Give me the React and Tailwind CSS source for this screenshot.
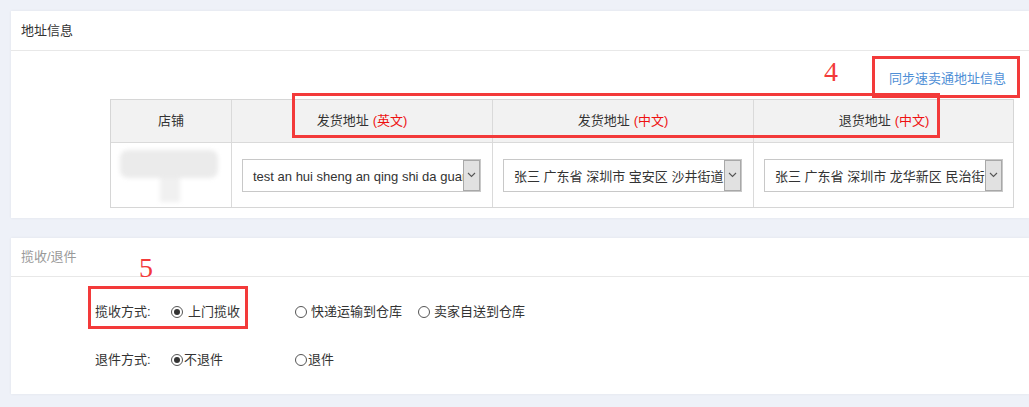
const font = { fontFamily: '"Liberation Sans", "Noto Sans CJK SC", sans-serif' };

function Select({ text }) {
  return (
    <div className="flex h-[33px] w-[239px] items-stretch border border-[#c8c8c8] bg-white">
      <div className="flex-1 overflow-hidden whitespace-nowrap pl-[10px] pt-[7px] text-[13px] text-[#333]">
        {text}
      </div>
      <div className="flex w-[17px] items-center justify-center border border-[#a8a8a8] bg-[#e1e1e1]">
        <svg width="9" height="6" viewBox="0 0 9 6">
          <path d="M1 1l3.5 3.5L8 1" fill="none" stroke="#555" strokeWidth="1.1" />
        </svg>
      </div>
    </div>
  );
}

function Radio({ checked }) {
  return (
    <span className="flex h-[12px] w-[12px] items-center justify-center rounded-full border border-[#555] bg-white">
      {checked && <span className="h-[6px] w-[6px] rounded-full bg-[#333]" />}
    </span>
  );
}

function Head({ label, lang }) {
  return (
    <div className="flex items-center justify-center border-l border-[#dadada] text-[13px] text-[#333]">
      {label}
      {lang && (
        <span className="ml-1 text-[#ee1111]">({lang})</span>
      )}
    </div>
  );
}

export default function App() {
  return (
    <div className="relative h-[407px] w-[1029px] overflow-hidden bg-[#eef1f8] pl-[11px] pt-[11px]" style={font}>
      <div className="h-[207px] bg-white shadow-[0_0_3px_rgba(0,0,0,0.06)]">
        <div className="flex h-[40px] items-center border-b border-[#e8e8e8] pl-[10px] text-[13px] text-[#333]">
          地址信息
        </div>
        <div className="flex h-[48px] items-center justify-end pr-[23px] pt-[8px]">
          <span className="text-[13px] text-[#4f8fd6]">同步速卖通地址信息</span>
        </div>
        <div className="ml-[99px] w-[904px] border border-[#d6d6d6]">
          <div className="grid h-[42px] grid-cols-[120px_261px_261px_261px] bg-[#f2f2f2]">
            <div className="flex items-center justify-center text-[13px] text-[#333]">店铺</div>
            <Head label="发货地址" lang="英文" />
            <Head label="发货地址" lang="中文" />
            <Head label="退货地址" lang="中文" />
          </div>
          <div className="grid h-[65px] grid-cols-[120px_261px_261px_261px] border-t border-[#dadada]">
            <div className="pl-[9px] pt-[7px]">
              <div className="blur-[2px]">
                <div className="h-[28px] w-[98px] rounded-[8px] bg-[#ebebeb]" />
                <div className="ml-[40px] h-[24px] w-[20px] bg-[#f0f0f0]" />
              </div>
            </div>
            <div className="flex items-center border-l border-[#dadada] pl-[10px]">
              <Select text="test an hui sheng an qing shi da guan qu" />
            </div>
            <div className="flex items-center border-l border-[#dadada] pl-[10px]">
              <Select text="张三 广东省 深圳市 宝安区 沙井街道 新桥" />
            </div>
            <div className="flex items-center border-l border-[#dadada] pl-[10px]">
              <Select text="张三 广东省 深圳市 龙华新区 民治街道 民康路" />
            </div>
          </div>
        </div>
      </div>

      <div className="mt-[20px] h-[156px] bg-white shadow-[0_0_3px_rgba(0,0,0,0.06)]">
        <div className="flex h-[39px] items-center border-b border-[#e8e8e8] pl-[10px] text-[13px] text-[#999]">
          揽收/退件
        </div>
        <div className="pl-[84px] pt-[25px] text-[13px] text-[#333]">
          <div className="flex h-[20px] items-center">
            <span className="w-[76px]">揽收方式:</span>
            <span className="flex w-[124px] items-center gap-[5px]">
              <Radio checked />
              上门揽收
            </span>
            <span className="flex items-center gap-[4px]">
              <Radio />
              快递运输到仓库
            </span>
            <span className="ml-[16px] flex items-center gap-[4px]">
              <Radio />
              卖家自送到仓库
            </span>
          </div>
          <div className="mt-[28px] flex h-[20px] items-center">
            <span className="w-[76px]">退件方式:</span>
            <span className="flex w-[124px] items-center gap-[1px]">
              <Radio checked />
              不退件
            </span>
            <span className="flex items-center gap-[1px]">
              <Radio />
              退件
            </span>
          </div>
        </div>
      </div>

      <div className="absolute left-[292px] top-[93px] h-[45px] w-[648px] border-[3px] border-[#f33a3a]" />
      <div className="absolute left-[872px] top-[56px] h-[42px] w-[148px] border-[3px] border-[#f33a3a]" />
      <div className="absolute left-[88px] top-[286px] h-[43px] w-[160px] border-[3px] border-[#f33a3a]" />
      <div className="absolute left-[824px] top-[56px] text-[28px] leading-[32px] text-[#f33a3a]" style={{ fontFamily: '"Liberation Serif", serif' }}>
        4
      </div>
      <div className="absolute left-[139px] top-[252px] text-[28px] leading-[32px] text-[#f33a3a]" style={{ fontFamily: '"Liberation Serif", serif' }}>
        5
      </div>
    </div>
  );
}
